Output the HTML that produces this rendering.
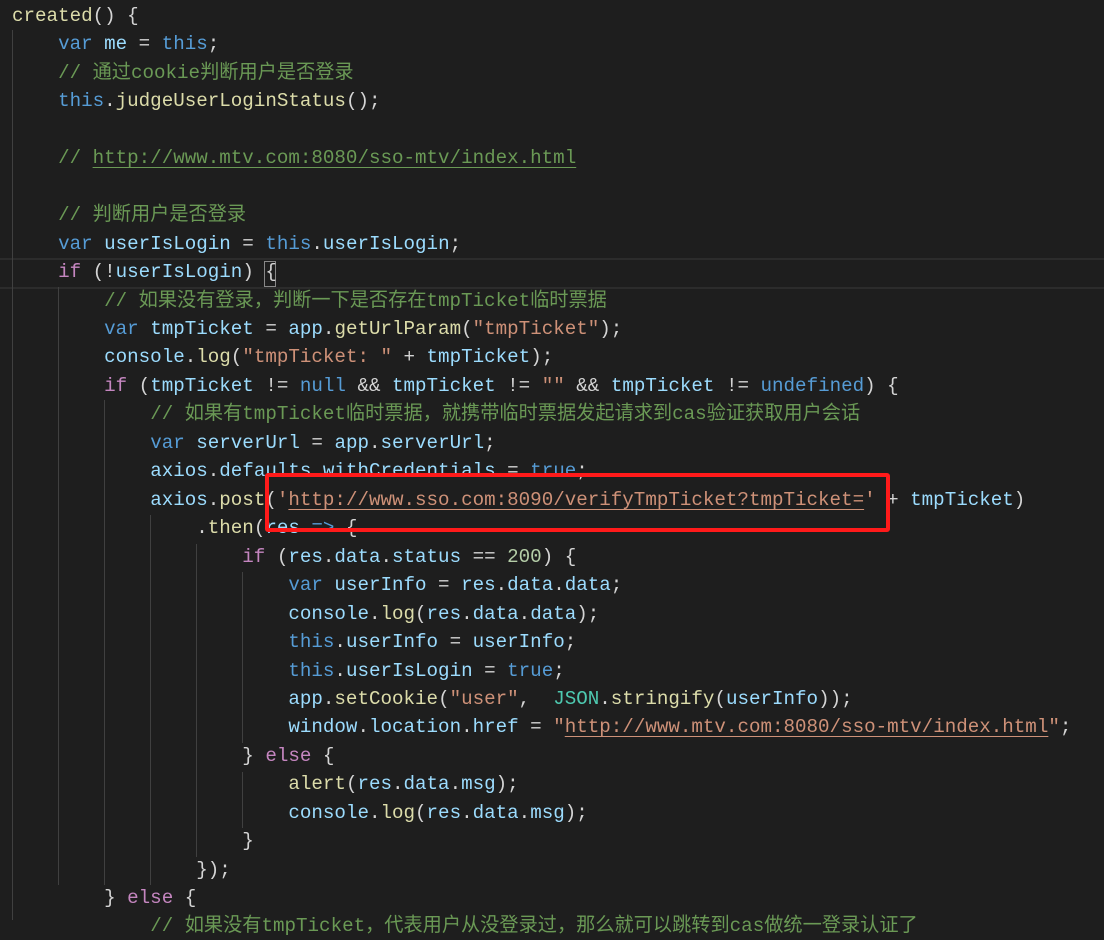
<!DOCTYPE html>
<html><head><meta charset="utf-8"><style>
body{margin:0;width:1104px;height:920px;background:#1e1e1e;overflow:hidden;position:relative;font-family:"Liberation Mono","Noto Sans CJK SC",monospace;font-size:19.2px;color:#d4d4d4}
.l{position:absolute;left:12px;height:28px;line-height:28px;white-space:pre}
.g{position:absolute;width:1px;background:#404040}
.k{color:#569cd6}.v{color:#9cdcfe}.f{color:#dcdcaa}.c{color:#6a9955}.s{color:#ce9178}.n{color:#b5cea8}.p{color:#c586c0}.t{color:#4ec9b0}
.u{text-decoration:underline;text-underline-offset:4px}
</style></head><body>
<div style="position:absolute;left:0;top:258px;width:1104px;height:27px;border-top:2px solid #2c2c2c;border-bottom:2px solid #2c2c2c"></div>
<div class="g" style="left:12px;top:30px;height:890px"></div>
<div class="g" style="left:58px;top:287px;height:598px"></div>
<div class="g" style="left:104px;top:400px;height:485px"></div>
<div class="g" style="left:150px;top:515px;height:370px"></div>
<div class="g" style="left:196px;top:544px;height:313px"></div>
<div class="g" style="left:242px;top:572px;height:171px"></div>
<div class="g" style="left:242px;top:772px;height:56px"></div>
<div style="position:absolute;left:264px;top:261px;width:10px;height:24px;border:1px solid #888"></div>

<div class="l" style="top:2px"><span class="f">created</span>() {</div>
<div class="l" style="top:30px">    <span class="k">var</span> <span class="v">me</span> = <span class="k">this</span>;</div>
<div class="l" style="top:59px">    <span class="c">// 通过cookie判断用户是否登录</span></div>
<div class="l" style="top:87px">    <span class="k">this</span>.<span class="f">judgeUserLoginStatus</span>();</div>
<div class="l" style="top:144px">    <span class="c">// <span class="u">http://www.mtv.com:8080/sso-mtv/index.html</span></span></div>
<div class="l" style="top:201px">    <span class="c">// 判断用户是否登录</span></div>
<div class="l" style="top:230px">    <span class="k">var</span> <span class="v">userIsLogin</span> = <span class="k">this</span>.<span class="v">userIsLogin</span>;</div>
<div class="l" style="top:258px">    <span class="p">if</span> (!<span class="v">userIsLogin</span>) {</div>
<div class="l" style="top:287px">        <span class="c">// 如果没有登录，判断一下是否存在tmpTicket临时票据</span></div>
<div class="l" style="top:315px">        <span class="k">var</span> <span class="v">tmpTicket</span> = <span class="v">app</span>.<span class="f">getUrlParam</span>(<span class="s">"tmpTicket"</span>);</div>
<div class="l" style="top:343px">        <span class="v">console</span>.<span class="f">log</span>(<span class="s">"tmpTicket: "</span> + <span class="v">tmpTicket</span>);</div>
<div class="l" style="top:372px">        <span class="p">if</span> (<span class="v">tmpTicket</span> != <span class="k">null</span> &amp;&amp; <span class="v">tmpTicket</span> != <span class="s">""</span> &amp;&amp; <span class="v">tmpTicket</span> != <span class="k">undefined</span>) {</div>
<div class="l" style="top:400px">            <span class="c">// 如果有tmpTicket临时票据，就携带临时票据发起请求到cas验证获取用户会话</span></div>
<div class="l" style="top:429px">            <span class="k">var</span> <span class="v">serverUrl</span> = <span class="v">app</span>.<span class="v">serverUrl</span>;</div>
<div class="l" style="top:457px">            <span class="v">axios</span>.<span class="v">defaults</span>.<span class="v">withCredentials</span> = <span class="k">true</span>;</div>
<div class="l" style="top:486px">            <span class="v">axios</span>.<span class="f">post</span>(<span class="s">'<span class="u">http://www.sso.com:8090/verifyTmpTicket?tmpTicket=</span>'</span> + <span class="v">tmpTicket</span>)</div>
<div class="l" style="top:514px">                .<span class="f">then</span>(<span class="v">res</span> <span class="k">=&gt;</span> {</div>
<div class="l" style="top:543px">                    <span class="p">if</span> (<span class="v">res</span>.<span class="v">data</span>.<span class="v">status</span> == <span class="n">200</span>) {</div>
<div class="l" style="top:571px">                        <span class="k">var</span> <span class="v">userInfo</span> = <span class="v">res</span>.<span class="v">data</span>.<span class="v">data</span>;</div>
<div class="l" style="top:600px">                        <span class="v">console</span>.<span class="f">log</span>(<span class="v">res</span>.<span class="v">data</span>.<span class="v">data</span>);</div>
<div class="l" style="top:628px">                        <span class="k">this</span>.<span class="v">userInfo</span> = <span class="v">userInfo</span>;</div>
<div class="l" style="top:657px">                        <span class="k">this</span>.<span class="v">userIsLogin</span> = <span class="k">true</span>;</div>
<div class="l" style="top:685px">                        <span class="v">app</span>.<span class="f">setCookie</span>(<span class="s">"user"</span>,  <span class="t">JSON</span>.<span class="f">stringify</span>(<span class="v">userInfo</span>));</div>
<div class="l" style="top:713px">                        <span class="v">window</span>.<span class="v">location</span>.<span class="v">href</span> = <span class="s">"<span class="u">http://www.mtv.com:8080/sso-mtv/index.html</span>"</span>;</div>
<div class="l" style="top:742px">                    } <span class="p">else</span> {</div>
<div class="l" style="top:770px">                        <span class="f">alert</span>(<span class="v">res</span>.<span class="v">data</span>.<span class="v">msg</span>);</div>
<div class="l" style="top:799px">                        <span class="v">console</span>.<span class="f">log</span>(<span class="v">res</span>.<span class="v">data</span>.<span class="v">msg</span>);</div>
<div class="l" style="top:827px">                    }</div>
<div class="l" style="top:856px">                });</div>
<div class="l" style="top:884px">        } <span class="p">else</span> {</div>
<div class="l" style="top:912px">            <span class="c">// 如果没有tmpTicket，代表用户从没登录过，那么就可以跳转到cas做统一登录认证了</span></div>

<div style="position:absolute;left:265px;top:473px;width:617px;height:51px;border:4px solid #ff1a1a;border-radius:3px"></div>
</body></html>
